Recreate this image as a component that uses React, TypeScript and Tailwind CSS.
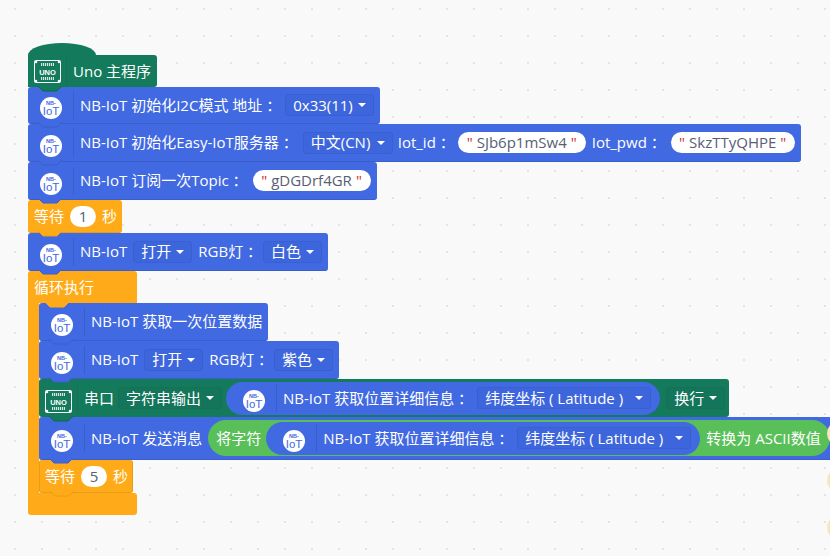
import type { ReactNode } from "react";

const BLUE = "#4169e1";
const GREEN = "#147a5c";
const ORANGE = "#ffab19";

function NbIcon() {
  return (
    <svg width="22" height="22" viewBox="0 0 22 22" className="mt-[6px] shrink-0">
      <circle cx="11" cy="11" r="11" fill="#fff" />
      <text x="11" y="8" textAnchor="middle" fontSize="5.5" fontWeight="700" fill="#4169e1" fontFamily="Liberation Sans, sans-serif">
        NB-
      </text>
      <text x="11" y="18" textAnchor="middle" fontSize="11.5" fill="#4169e1" fontFamily="Liberation Sans, sans-serif">
        IoT
      </text>
    </svg>
  );
}

function UnoIcon({ className = "" }: { className?: string }) {
  const dots = [
    [2, 2],
    [25, 2],
    [2, 21],
    [25, 21],
  ];
  return (
    <svg width="27" height="23" viewBox="0 0 27 23" className={`shrink-0 ${className}`}>
      <rect x="0.5" y="0.5" width="26" height="22" rx="1" fill="none" stroke="#fff" />
      {dots.map(([x, y]) => (
        <circle key={x * 100 + y} cx={x} cy={y} r="1.3" fill="#fff" />
      ))}
      <path d="M7 4.5 H20 M7 18.5 H20" stroke="#d5e6e0" strokeWidth="3" strokeDasharray="1.2 0.8" />
      <text x="13.5" y="14.5" textAnchor="middle" fontSize="7.5" fontWeight="700" fill="#fff" fontFamily="Liberation Sans, sans-serif">
        UNO
      </text>
    </svg>
  );
}

function Tab({ color, edge, left = "left-[10px]" }: { color: string; edge: string; left?: string }) {
  return (
    <svg width="24" height="6" viewBox="0 0 24 6" className={`absolute bottom-[-5px] z-10 ${left}`}>
      <path d="M0 0 L5 5 H19 L24 0 Z" fill={color} />
      <path d="M0 0 L5 5 H19 L24 0" fill="none" stroke={edge} />
    </svg>
  );
}

function Sep({ className }: { className: string }) {
  return <div className={`h-[28px] w-px shrink-0 ${className}`} />;
}

function Dropdown({ label, dark = false, className = "" }: { label: string; dark?: boolean; className?: string }) {
  return (
    <div
      className={`flex h-[22px] shrink-0 items-center justify-between gap-[5px] rounded-[3px] border px-[7px] whitespace-nowrap ${
        dark ? "border-[#1a6e56] bg-[#13755a]" : "border-[#3a5fd0] bg-[#3e66dc]"
      } ${className}`}
    >
      <span>{label}</span>
      <svg width="8" height="4" viewBox="0 0 8 4">
        <path d="M0 0 H8 L4 4 Z" fill="#fff" />
      </svg>
    </div>
  );
}

function Str({ value, className }: { value: string; className: string }) {
  return (
    <div className={`flex h-[21px] shrink-0 items-center justify-center gap-[4px] rounded-full bg-white text-[#575e75] whitespace-nowrap ${className}`}>
      <span className="text-[#c8332f]">"</span>
      <span>{value}</span>
      <span className="text-[#c8332f]">"</span>
    </div>
  );
}

function Num({ value }: { value: string }) {
  return (
    <div className="flex h-[21px] w-[26px] shrink-0 items-center justify-center rounded-full bg-white text-[#575e75]">
      {value}
    </div>
  );
}

function NbRow({ h = "h-[38px]", children }: { h?: string; children: ReactNode }) {
  return (
    <div className={`relative flex w-fit items-center rounded-[3px] border-b border-[#3a5fcb] bg-[#4169e1] pl-[12px] pr-[6px] ${h}`}>
      <NbIcon />
      <Sep className="ml-[11px] bg-[#3a5fcb]" />
      <div className="ml-[6px] flex items-center gap-[6px] whitespace-nowrap">{children}</div>
      <Tab color={BLUE} edge="#3a5fcb" />
    </div>
  );
}

function WaitRow({ value, inner = false }: { value: string; inner?: boolean }) {
  return (
    <div
      className={`relative flex h-[33px] w-[94px] items-center gap-[6px] rounded-[3px] border-b bg-[#ffab19] ${
        inner ? "border-x pl-[5px]" : "pl-[6px]"
      } border-[#e99c14]`}
    >
      <span>等待</span>
      <Num value={value} />
      <span>秒</span>
      <Tab color={ORANGE} edge="#e99c14" />
    </div>
  );
}

function LocationPill() {
  return (
    <div className="flex h-[33px] shrink-0 items-center rounded-full bg-[#4169e1] pl-[17px] pr-[9px]">
      <NbIcon />
      <Sep className="ml-[11px] bg-[#3a5fcb]" />
      <span className="ml-[6px] mr-[4px] whitespace-nowrap">NB-IoT 获取位置详细信息 ：</span>
      <Dropdown label="纬度坐标 ( Latitude )" className="w-[174px]" />
    </div>
  );
}

function Stack() {
  return (
    <div className="flex flex-col items-start pl-[28px] pt-[43px] text-[15px] text-white [font-family:'Open_Sans','Noto_Sans_CJK_SC',sans-serif]">
      {/* hat */}
      <div className="h-[12px] w-[68px] rounded-t-[34px_12px] bg-[#147a5c]" />
      <div className="relative flex h-[32px] w-[129px] items-center rounded-r-[3px] bg-[#147a5c] pl-[6px]">
        <UnoIcon />
        <Sep className="ml-[5px] bg-[#1a6e56]" />
        <span className="ml-[6px] whitespace-nowrap">Uno 主程序</span>
        <Tab color={GREEN} edge="#10684e" />
      </div>

      <NbRow h="h-[37px]">
        <span className="-mr-[2px]">NB-IoT 初始化I2C模式 地址 ：</span>
        <Dropdown label="0x33(11)" />
      </NbRow>
      <NbRow>
        <span className="-mr-[1px]">NB-IoT 初始化Easy-IoT服务器 ：</span>
        <Dropdown label="中文(CN)" className="w-[90px]" />
        <span className="-mr-[3px] -ml-[1px]">Iot_id ：</span>
        <Str value="SJb6p1mSw4" className="w-[128px]" />
        <span className="-mr-[1px]">Iot_pwd ：</span>
        <Str value="SkzTTyQHPE" className="w-[124px]" />
      </NbRow>
      <NbRow>
        <span className="-mr-[1px]">NB-IoT 订阅一次Topic ：</span>
        <Str value="gDGDrf4GR" className="w-[118px]" />
      </NbRow>
      <WaitRow value="1" />
      <NbRow>
        <span>NB-IoT</span>
        <Dropdown label="打开" />
        <span className="-mr-[5px]">RGB灯 ：</span>
        <Dropdown label="白色" />
      </NbRow>

      {/* loop */}
      <div className="relative flex h-[32px] w-[109px] items-center rounded-t-[3px] bg-[#ffab19] pl-[6px]">
        <span>循环执行</span>
        <Tab color={ORANGE} edge="#ffab19" left="left-[17px]" />
      </div>
      <div className="flex items-stretch">
        <div className="w-[11px] shrink-0 bg-[#ffab19]" />
        <div className="flex flex-col items-start">
          <NbRow>
            <span>NB-IoT 获取一次位置数据</span>
          </NbRow>
          <NbRow>
            <span>NB-IoT</span>
            <Dropdown label="打开" />
            <span className="-mr-[5px]">RGB灯 ：</span>
            <Dropdown label="紫色" />
          </NbRow>

          <div className="relative flex h-[38px] w-[690px] items-center rounded-[3px] bg-[#147a5c] pl-[6px]">
            <UnoIcon className="mt-[6px]" />
            <Sep className="ml-[5px] bg-[#1a6e56]" />
            <span className="ml-[6px] mr-[4px] whitespace-nowrap">串口</span>
            <Dropdown label="字符串输出" dark />
            <div className="ml-[4px]">
              <LocationPill />
            </div>
            <Dropdown label="换行" dark className="ml-[6px]" />
            <Tab color={GREEN} edge="#10684e" />
          </div>

          <div className="relative flex h-[43px] w-[791px] items-center rounded-l-[3px] border-b border-[#3a5fcb] bg-[#4169e1] pl-[12px]">
            <NbIcon />
            <Sep className="ml-[11px] bg-[#3a5fcb]" />
            <span className="ml-[6px] w-[112px] whitespace-nowrap">NB-IoT 发送消息</span>
            <div className="ml-[6px] flex h-[36px] w-[622px] shrink-0 items-center rounded-full bg-[#59c059]">
              <span className="ml-[8px] mr-[5px] whitespace-nowrap">将字符</span>
              <LocationPill />
              <span className="ml-[6px] whitespace-nowrap">转换为 ASCII数值</span>
            </div>
            <Tab color={BLUE} edge="#3a5fcb" />
          </div>

          <WaitRow value="5" inner />
        </div>
      </div>
      <div className="h-[22px] w-[109px] rounded-b-[3px] rounded-tr-[3px] bg-[#ffab19]" />
    </div>
  );
}

export default function App() {
  return (
    <div className="relative h-[556px] w-[830px] overflow-hidden bg-[#f9f9f9] bg-[radial-gradient(circle_at_15px_9px,#e4e4e4_1px,transparent_1.5px)] bg-[size:27px_27px]">
      <Stack />
      <div className="absolute left-[827px] top-[421px] h-[25px] w-[25px] rounded-full bg-[#fbe3bd]" />
      <div className="absolute left-[827px] top-[468px] h-[25px] w-[25px] rounded-full bg-[#fbe3bd]" />
      <div className="absolute left-[827px] top-[515px] h-[25px] w-[25px] rounded-full bg-[#fbe3bd]" />
    </div>
  );
}
